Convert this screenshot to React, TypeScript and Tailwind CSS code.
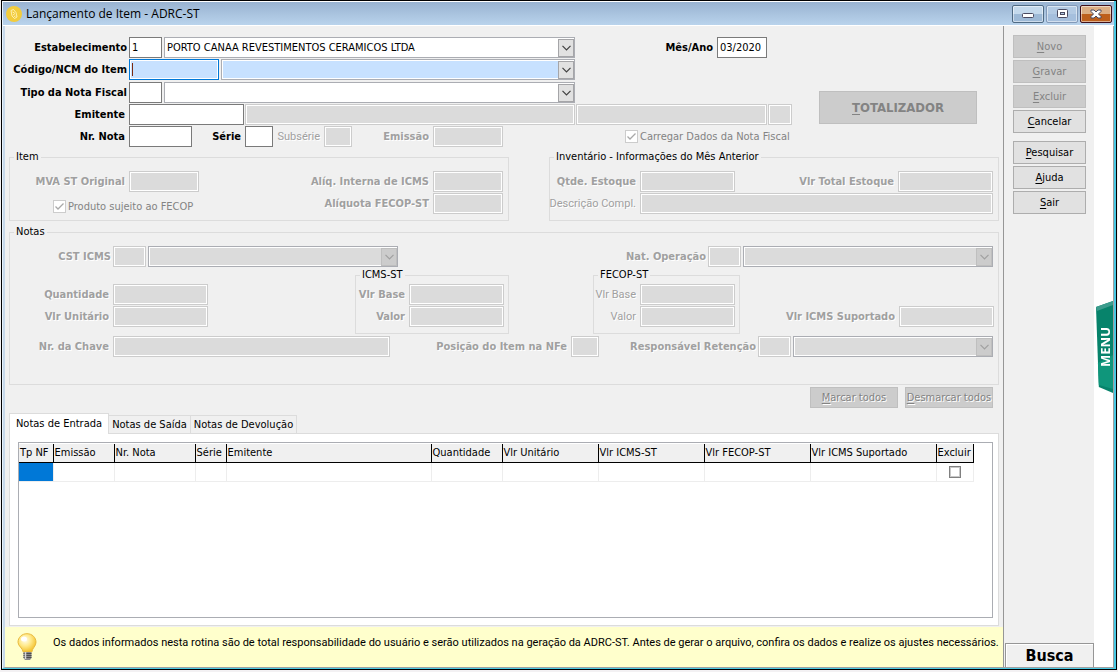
import { useId } from "react";
import type { ReactNode } from "react";
import { clsx } from "clsx";

const columns = [
  { title: "Tp NF", width: "w-[34px]" },
  { title: "Emissão", width: "w-[61px]" },
  { title: "Nr. Nota", width: "w-[81px]" },
  { title: "Série", width: "w-[31px]" },
  { title: "Emitente", width: "w-[205px]" },
  { title: "Quantidade", width: "w-[71px]" },
  { title: "Vlr Unitário", width: "w-[96px]" },
  { title: "Vlr ICMS-ST", width: "w-[106px]" },
  { title: "Vlr FECOP-ST", width: "w-[106px]" },
  { title: "Vlr ICMS Suportado", width: "w-[126px]" },
  { title: "Excluir", width: "w-[37px]" },
];

const tabs = ["Notas de Entrada", "Notas de Saída", "Notas de Devolução"];

const disabledText = "text-[#a0a0a0] [text-shadow:1px_1px_0_#fff]";

function Label({
  htmlFor,
  disabled,
  light,
  className,
  children,
}: {
  htmlFor: string;
  disabled?: boolean;
  light?: boolean;
  className?: string;
  children: ReactNode;
}) {
  return (
    <label
      htmlFor={htmlFor}
      className={clsx(
        "flex shrink-0 justify-end whitespace-nowrap",
        light ? "font-['Roboto',sans-serif]" : "font-bold",
        disabled && disabledText,
        className
      )}
    >
      {children}
    </label>
  );
}

function Input({
  id,
  label,
  value,
  disabled,
  className,
}: {
  id?: string;
  label?: string;
  value?: string;
  disabled?: boolean;
  className?: string;
}) {
  return (
    <input
      id={id}
      type="text"
      aria-label={label}
      defaultValue={value}
      disabled={disabled}
      className={clsx(
        "h-[21px] shrink-0 rounded-none border px-0.5 outline-none",
        disabled
          ? "border-[#cccccc] bg-[#dbdbdb] shadow-[inset_0_0_0_1px_#fff]"
          : "border-[#7a7a7a] bg-white",
        className
      )}
    />
  );
}

function Combo({
  label,
  value = "",
  disabled,
  active,
}: {
  label: string;
  value?: string;
  disabled?: boolean;
  active?: boolean;
}) {
  return (
    <div className="relative h-[21px] min-w-0 flex-1">
      <select
        aria-label={label}
        disabled={disabled}
        defaultValue={value}
        className={clsx(
          "h-full w-full appearance-none rounded-none border border-[#abadb3] px-0.5 opacity-100 shadow-[inset_0_0_0_1px_#fff] outline-none",
          disabled ? "bg-[#dbdbdb]" : active ? "bg-[#c7e1ff]" : "bg-white"
        )}
      >
        <option>{value}</option>
      </select>
      <span
        className={clsx(
          "pointer-events-none absolute top-[2px] right-px bottom-px flex w-4 items-center justify-center border",
          disabled ? "border-[#bfbfbf] bg-[#cccccc] text-[#a0a0a0]" : "border-[#a5a5a8] bg-[#e1e1e1] text-[#404040]"
        )}
      >
        <svg viewBox="0 0 9 6" className="h-[6px] w-[9px]" fill="none" stroke="currentColor">
          <path d="M0.5 0.8 4.5 4.8 8.5 0.8" strokeWidth="1.2" />
        </svg>
      </span>
    </div>
  );
}

// Labelled input, used by most of the form.
function Field({
  label,
  labelWidth,
  width,
  light,
  enabled,
  className,
}: {
  label: string;
  labelWidth?: string;
  width: string;
  light?: boolean;
  enabled?: boolean;
  className?: string;
}) {
  const id = useId();
  return (
    <div className={clsx("flex items-center gap-1", className)}>
      <Label htmlFor={id} disabled={!enabled} light={light} className={labelWidth}>
        {label}
      </Label>
      <Input id={id} disabled={!enabled} className={width} />
    </div>
  );
}

// Code box followed by the drop-down with its description.
function Lookup({
  label,
  labelWidth,
  code,
  codeWidth = "w-[33px]",
  value,
  disabled,
  active,
}: {
  label: string;
  labelWidth: string;
  code?: string;
  codeWidth?: string;
  value?: string;
  disabled?: boolean;
  active?: boolean;
}) {
  const id = useId();
  return (
    <div className="flex items-center gap-0.5">
      <Label htmlFor={id} disabled={disabled} className={labelWidth}>
        {label}
      </Label>
      {active ? (
        <div className="relative flex">
          <input
            id={id}
            type="text"
            className="h-[21px] w-[90px] border border-[#0078d7] bg-[#c7e1ff] px-[3px] shadow-[inset_0_0_0_1px_#fff] outline-none"
          />
          <span className="absolute top-1 left-[3px] h-[13px] w-px bg-[#7a2a10]" />
        </div>
      ) : (
        <Input id={id} value={code} disabled={disabled} className={codeWidth} />
      )}
      <Combo label={label} value={value} disabled={disabled} active={active} />
    </div>
  );
}

function Check({ label, className }: { label: string; className?: string }) {
  return (
    <label className={clsx("flex items-center gap-0.5 whitespace-nowrap text-[#838383]", className)}>
      <span className="relative flex size-[13px]">
        <input
          type="checkbox"
          defaultChecked
          disabled
          className="size-[13px] appearance-none border border-[#cccccc] bg-white"
        />
        <svg viewBox="0 0 13 13" className="pointer-events-none absolute inset-0" fill="none" stroke="#a8a8a8">
          <path d="M2.5 6.5 5 9 10.5 3.5" strokeWidth="1.3" />
        </svg>
      </span>
      {label}
    </label>
  );
}

function Group({ title, className, children }: { title: string; className?: string; children: ReactNode }) {
  return (
    <fieldset className={clsx("min-w-0 border border-[#dcdcdc]", className)}>
      <legend className="ml-1 px-0.5 leading-[14px]">{title}</legend>
      {children}
    </fieldset>
  );
}

function Button({ text, disabled, className }: { text: string; disabled?: boolean; className?: string }) {
  return (
    <button
      type="button"
      disabled={disabled}
      className={clsx(
        "border whitespace-nowrap",
        disabled ? "border-[#bfbfbf] bg-[#cccccc] text-[#838383]" : "border-[#adadad] bg-[#e1e1e1]",
        className
      )}
    >
      <span className="underline underline-offset-2">{text[0]}</span>
      {text.slice(1)}
    </button>
  );
}

function TitleBar() {
  const frame =
    "flex h-[18px] w-8 items-center justify-center rounded-[2px] border shadow-[inset_0_0_0_1px_rgba(255,255,255,0.5)]";
  return (
    <header className="flex h-[25px] items-center border-t border-b border-white bg-linear-to-b from-[#99b3d1] to-[#b9d3ec] pr-0.5 pl-[3px]">
      <svg viewBox="0 0 16 16" className="mr-1 size-4">
        <circle cx="8" cy="8" r="8" fill="#f2cc3c" />
        <path
          d="M5 4.5 7.5 3.5 10 6.5 11 11 8.5 12.5 6 10zM6.5 6l2 1M7 9l2-1.500M8 10.500l1.500-.5"
          fill="none"
          stroke="#fff3bd"
          strokeWidth="0.9"
        />
      </svg>
      <h1 className="flex-1 font-['Open_Sans',sans-serif] text-[12px]">Lançamento de Item - ADRC-ST</h1>
      <div className="flex gap-0.5">
        <button
          type="button"
          aria-label="Minimizar"
          className={clsx(frame, "border-[#4f6a83] bg-linear-to-b from-[#c4d9ec] from-50% to-[#9db9d6] to-50%")}
        >
          <svg viewBox="0 0 12 6" className="mt-1 h-[6px] w-3">
            <rect x="0.500" y="0.500" width="11" height="4" rx="1" fill="#fff" stroke="#4a4a60" />
          </svg>
        </button>
        <button
          type="button"
          aria-label="Maximizar"
          className={clsx(frame, "border-[#8299b8] bg-linear-to-b from-[#b3cae3] from-50% to-[#a5bfdd] to-50%")}
        >
          <svg viewBox="0 0 11 9" className="h-[9px] w-[11px]">
            <rect x="0.500" y="0.500" width="10" height="8" rx="1" fill="#fff" stroke="#4a4a60" />
            <rect x="3.500" y="3.500" width="4" height="2" fill="#b3cae3" stroke="#4a4a60" />
          </svg>
        </button>
        <button
          type="button"
          aria-label="Fechar"
          className={clsx(frame, "border-[#3f0f1a] bg-linear-to-b from-[#dcae84] from-50% to-[#bd5f1c] to-50%")}
        >
          <svg viewBox="0 0 12 10" className="h-[10px] w-3">
            <path
              d="M1 1h3l2 2 2-2h3v1.500L8.500 5 11 7.500V9H8L6 7 4 9H1V7.500L3.500 5 1 2.500z"
              fill="#fff"
              stroke="#4a4a60"
            />
          </svg>
        </button>
      </div>
    </header>
  );
}

function Bulb() {
  return (
    <svg viewBox="0 0 20 28" className="h-7 w-5 shrink-0">
      <defs>
        <radialGradient id="glass" cx="0.4" cy="0.35" r="0.65">
          <stop offset="0" stopColor="#fffef0" />
          <stop offset="0.5" stopColor="#ffe98a" />
          <stop offset="1" stopColor="#f3c22f" />
        </radialGradient>
      </defs>
      <path
        d="M10 0.700c5.200 0 9 3.800 9 8.600 0 3.800-3.600 5.600-4.200 9.700H6.200C5.600 14.900 1 13.100 1 9.300 1 4.500 4.800 0.700 10 0.700z"
        fill="url(#glass)"
        stroke="#e9b93c"
      />
      <ellipse cx="7" cy="6" rx="3" ry="2.500" fill="#fff" />
      <path d="M6.500 19h8v6l-1.500 2h-5l-1.500-2z" fill="#8a8a8a" />
      <path d="M6.500 20.500h8M6.500 22.500h8M6.500 24.500h8" stroke="#4d4d4d" />
      <path d="M8.500 19v7" stroke="#d8d8d8" strokeWidth="1.500" />
    </svg>
  );
}

function Header() {
  const id = useId();
  const issuer = useId();
  return (
    <section className="grid grid-cols-[784fr_206fr]">
      <div className="flex flex-col gap-px">
        <div className="grid grid-cols-[566fr_218fr]">
          <div className="flex flex-col gap-0.5">
            <div className="flex flex-col gap-px">
              <Lookup
                label="Estabelecimento"
                labelWidth="w-[118px]"
                code="1"
                value="PORTO CANAA REVESTIMENTOS CERAMICOS LTDA"
              />
              <Lookup label="Código/NCM do Item" labelWidth="w-[118px]" active />
            </div>
            <Lookup label="Tipo da Nota Fiscal" labelWidth="w-[118px]" />
          </div>
          <div className="flex items-center gap-1 self-start">
            <Label htmlFor={id} className="w-[138px]">
              Mês/Ano
            </Label>
            <Input id={id} value="03/2020" className="w-[50px]" />
          </div>
        </div>
        <div className="grid grid-cols-[566fr_218fr]">
          <div className="flex items-center">
            <Label htmlFor={issuer} className="mr-1 w-[116px]">
              Emitente
            </Label>
            <Input id={issuer} className="mr-px w-[115px]" />
            <Input label="Nome do emitente" disabled className="min-w-0 flex-1" />
          </div>
          <div className="flex gap-px px-px">
            <Input label="Município" disabled className="min-w-0 flex-1" />
            <Input label="UF" disabled className="w-6" />
          </div>
        </div>
        <div className="grid grid-cols-[566fr_218fr]">
          <div className="flex items-center">
            <Field label="Nr. Nota" labelWidth="w-[116px]" width="w-[63px]" enabled />
            <Field label="Série" labelWidth="w-[49px]" width="w-7" enabled />
            <Field label="Subsérie" labelWidth="w-[47px]" width="w-7" light />
            <Field label="Emissão" labelWidth="w-[77px]" width="w-[70px]" />
          </div>
          <Check label="Carregar Dados da Nota Fiscal" className="pl-[50px]" />
        </div>
      </div>
      <div className="flex flex-col items-end justify-end pr-[22px] pb-[23px] pl-[26px]">
        <Button text="TOTALIZADOR" disabled className="h-[33px] w-full text-[13px] font-bold" />
      </div>
    </section>
  );
}

function Notes() {
  return (
    <Group title="Notas" className="mt-1 pt-[7px] pb-[27px]">
      <div className="grid grid-cols-[388fr_600fr]">
        <Lookup label="CST ICMS" labelWidth="w-[101px]" disabled />
        <div className="pr-[5px]">
          <Lookup label="Nat. Operação" labelWidth="w-[308px]" disabled />
        </div>
      </div>
      <div className="mt-px grid grid-cols-[345fr_238fr_405fr]">
        <div className="flex flex-col gap-px pt-4">
          <Field label="Quantidade" labelWidth="w-[99px]" width="w-[95px]" />
          <Field label="Vlr Unitário" labelWidth="w-[99px]" width="w-[95px]" />
        </div>
        <Group title="ICMS-ST" className="flex w-[154px] flex-col gap-px pt-0.5 pr-1 pb-1.5">
          <Field label="Vlr Base" width="w-[95px]" className="justify-end" />
          <Field label="Valor" width="w-[95px]" className="justify-end" />
        </Group>
        <div className="flex items-start justify-between pr-1">
          <Group title="FECOP-ST" className="flex w-[147px] flex-col gap-px pt-0.5 pr-1 pb-1.5">
            <Field label="Vlr Base" width="w-[95px]" className="justify-end" light />
            <Field label="Valor" width="w-[95px]" className="justify-end" light />
          </Group>
          <Field label="Vlr ICMS Suportado" width="w-[95px]" className="pt-[38px]" />
        </div>
      </div>
      <div className="mt-0.5 grid grid-cols-[589fr_399fr]">
        <div className="flex justify-between">
          <Field label="Nr. da Chave" labelWidth="w-[99px]" width="w-[277px]" />
          <Field label="Posição do Item na NFe" width="w-7" />
        </div>
        <div className="pr-[5px]">
          <Lookup label="Responsável Retenção" labelWidth="w-[157px]" disabled />
        </div>
      </div>
    </Group>
  );
}

function Grid() {
  return (
    <div className="flex-1 border border-[#abadb3] bg-white pt-px">
      <table className="w-[98%] table-fixed border-collapse">
        <thead>
          <tr className="h-[18px]">
            {columns.map((col) => (
              <th
                key={col.title}
                className={clsx(
                  col.width,
                  "overflow-hidden border-r border-b border-black bg-[#f0f0f0] p-0 pl-px text-left font-normal whitespace-nowrap"
                )}
              >
                {col.title}
              </th>
            ))}
          </tr>
        </thead>
        <tbody>
          <tr className="h-[19px]">
            {columns.map((col, i) => (
              <td
                key={col.title}
                className={clsx("border-r border-b border-[#ededed] p-0", i === 0 && "bg-[#0078d7]")}
              >
                {col.title === "Excluir" && (
                  <input
                    type="checkbox"
                    aria-label="Excluir"
                    className="mx-auto block size-3 appearance-none border border-[#808080] bg-white shadow-[inset_0_0_0_1px_#c8c8c8]"
                  />
                )}
              </td>
            ))}
          </tr>
        </tbody>
      </table>
    </div>
  );
}

function Sidebar() {
  return (
    <aside className="flex w-[91px] shrink-0 flex-col border-l border-[#969696]">
      <nav className="flex flex-col gap-0.5 pt-[9px] pr-2 pl-[9px]">
        <Button text="Novo" disabled className="h-[23px]" />
        <Button text="Gravar" disabled className="h-[23px]" />
        <Button text="Excluir" disabled className="h-[23px]" />
        <Button text="Cancelar" className="mb-1.5 h-[23px]" />
        <Button text="Pesquisar" className="h-[23px]" />
        <Button text="Ajuda" className="h-[23px]" />
        <Button text="Sair" className="h-[23px]" />
      </nav>
      <button
        type="button"
        className="mt-auto ml-px h-6 border-t border-r border-l border-[#969696] text-[16px] font-bold shadow-[inset_1px_1px_0_#fff]"
      >
        Busca
      </button>
    </aside>
  );
}

export default function App() {
  return (
    <div className="flex min-h-screen flex-col bg-[#f3f1f3] pr-px pb-0.5 pl-px font-['DejaVu_Sans_Condensed','DejaVu_Sans',sans-serif] text-[11px] leading-[14px] text-black">
      <div className="flex flex-1 flex-col border border-black">
        <div className="flex flex-1 flex-col border-r-2 border-b border-l border-[#49c8e3] border-l-[#e8f2fb]">
          <TitleBar />
          <div className="flex flex-1 border-r border-b border-l-2 border-[#a0a0a0] border-l-[#c6d8ea] bg-[#f0f0f0]">
            <main className="flex min-w-0 flex-1 flex-col">
              <div className="flex flex-1 flex-col px-1 pt-[11px]">
                <Header />
                <div className="mt-[3px] grid grid-cols-[500fr_450fr] gap-10">
                  <Group title="Item" className="flex flex-col gap-px pt-[7px] pb-1.5">
                    <div className="flex justify-between pr-[5px]">
                      <Field label="MVA ST Original" labelWidth="w-[115px]" width="w-[70px]" />
                      <Field label="Alíq. Interna de ICMS" width="w-[70px]" />
                    </div>
                    <div className="flex justify-between pr-[5px] pl-[43px]">
                      <Check label="Produto sujeito ao FECOP" className="pt-1.5" />
                      <Field label="Alíquota FECOP-ST" width="w-[70px]" />
                    </div>
                  </Group>
                  <Group title="Inventário - Informações do Mês Anterior" className="pt-[7px] pr-[5px] pb-1.5">
                    <div className="flex justify-between">
                      <Field label="Qtde. Estoque" labelWidth="w-[86px]" width="w-[95px]" />
                      <Field label="Vlr Total Estoque" width="w-[95px]" />
                    </div>
                    <Field
                      label="Descrição Compl."
                      labelWidth="w-[86px]"
                      width="min-w-0 flex-1"
                      className="mt-px"
                      light
                    />
                  </Group>
                </div>
                <Notes />
                <div className="mt-0.5 flex justify-end gap-[7px] pr-1.5">
                  <Button text="Marcar todos" disabled className="h-[21px] w-[88px] [text-shadow:1px_1px_0_#fff]" />
                  <Button text="Desmarcar todos" disabled className="h-[21px] w-[88px] [text-shadow:1px_1px_0_#fff]" />
                </div>
                <div role="tablist" className="mt-[5px] flex items-end">
                  {tabs.map((tab, i) => (
                    <button
                      key={tab}
                      type="button"
                      role="tab"
                      aria-selected={i === 0}
                      className={clsx(
                        "border-t border-r border-[#dcdcdc] whitespace-nowrap",
                        i === 0 ? "z-10 -mb-px h-[21px] w-[100px] border-l bg-white" : "h-[18px]",
                        i === 1 && "w-[82px]",
                        i === 2 && "w-[106px]"
                      )}
                    >
                      {tab}
                    </button>
                  ))}
                </div>
                <div
                  role="tabpanel"
                  className="flex flex-1 flex-col border border-[#dcdcdc] bg-white pt-2 pr-[5px] pb-[7px] pl-2"
                >
                  <Grid />
                </div>
              </div>
              <footer className="mt-px flex h-10 items-center bg-[#ffffcc] pl-3">
                <Bulb />
                <p className="ml-4 pb-2 font-['Roboto',sans-serif] whitespace-nowrap">
                  Os dados informados nesta rotina são de total responsabilidade do usuário e serão utilizados na
                  geração da ADRC-ST. Antes de gerar o arquivo, confira os dados e realize os ajustes necessários.
                </p>
              </footer>
            </main>
            <Sidebar />
            <div className="flex w-[19px] shrink-0 items-center justify-end bg-white">
              <button type="button" className="relative flex h-[92px] w-[17px] items-center justify-center">
                <svg viewBox="0 0 18 92" className="absolute inset-0 h-full w-full" preserveAspectRatio="none">
                  <path d="M0 6 18 0V92L3 86z" fill="#07836b" />
                  <path d="M0 6 18 0V4L1 10z" fill="#3c9c8d" />
                  <path d="M2 62 18 54V88L3 84z" fill="#0f967b" />
                </svg>
                <span className="relative rotate-180 font-['Open_Sans',sans-serif] text-[13px] font-bold text-white [writing-mode:vertical-rl]">
                  MENU
                </span>
              </button>
            </div>
          </div>
        </div>
      </div>
    </div>
  );
}
